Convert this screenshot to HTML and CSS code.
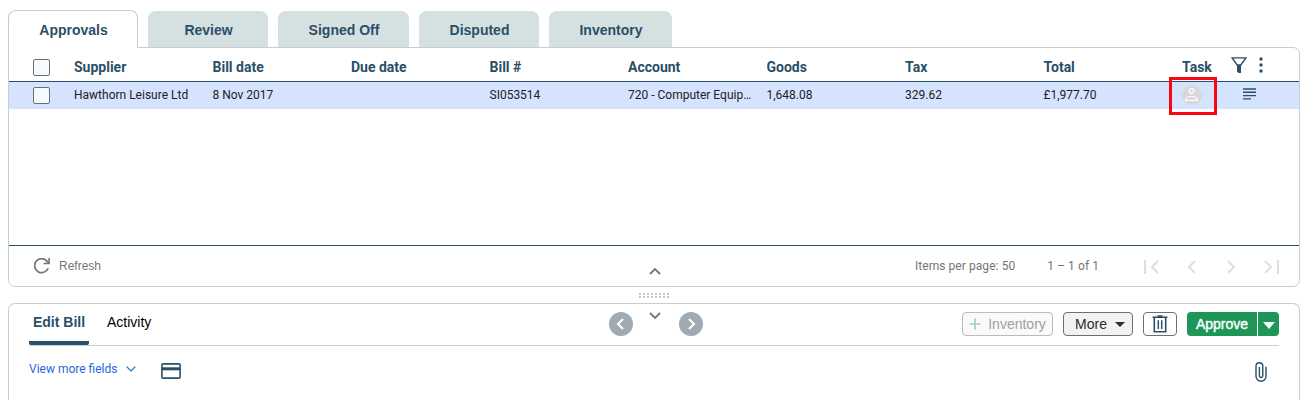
FILE: index.html
```
<!DOCTYPE html>
<html lang="en">
<head>
    <meta charset="UTF-8">
    <meta name="viewport" content="width=device-width, initial-scale=1.0">
    <title>Approvals</title>
    <link rel="stylesheet" href="styles.css">
</head>
<body>
    <nav class="tabs">
        <a class="tab active">Approvals</a>
        <a class="tab">Review</a>
        <a class="tab tab-wide">Signed Off</a>
        <a class="tab">Disputed</a>
        <a class="tab tab-last">Inventory</a>
    </nav>

    <section class="panel bills">
        <div class="row row-head">
            <span class="check"></span>
            <span>Supplier</span>
            <span>Bill date</span>
            <span>Due date</span>
            <span>Bill #</span>
            <span>Account</span>
            <span>Goods</span>
            <span>Tax</span>
            <span>Total</span>
            <span>Task</span>
            <span class="head-icons">
                <svg width="16" height="16" viewBox="0 0 16 16"><path d="M1.2 .9H14.8L9.8 8H6.2Z" fill="none" stroke="currentColor" stroke-width="1.4"/><path d="M6 8h4v8H7.6L6 14.4z" fill="currentColor"/></svg>
                <svg width="4" height="16" viewBox="0 0 4 16" fill="currentColor"><circle cx="2" cy="2" r="1.7"/><circle cx="2" cy="8" r="1.7"/><circle cx="2" cy="14" r="1.7"/></svg>
            </span>
        </div>
        <div class="row row-bill">
            <span class="check"></span>
            <span>Hawthorn Leisure Ltd</span>
            <span>8 Nov 2017</span>
            <span></span>
            <span>SI053514</span>
            <span class="account">720 - Computer Equip…</span>
            <span>1,648.08</span>
            <span>329.62</span>
            <span>£1,977.70</span>
            <span class="task">
                <svg width="20" height="20" viewBox="0 0 20 20"><circle cx="10" cy="10" r="10" fill="#d8d8d8"/><g fill="none" stroke="#fff" stroke-width="1.2"><circle cx="9.5" cy="6" r="2.3"/><path d="M3.6 15.4v-.9c0-1.8 3-3 5.9-3s5.9 1.2 5.9 3v.9z" stroke-linejoin="round"/></g></svg>
                <span class="highlight"></span>
            </span>
            <span class="notes">
                <svg width="13" height="12" viewBox="0 0 13 12"><path d="M0 1h13M0 4.3h13M0 7.6h13M0 10.9h8" stroke="currentColor" stroke-width="1.4"/></svg>
            </span>
        </div>
        <div class="grid-space"></div>
        <div class="footer">
            <a class="refresh">
                <svg width="16" height="16" viewBox="0 0 16 16"><path d="M14.2 10.2A7 7 0 1 1 13.2 3.4L14.6 5" fill="none" stroke="currentColor" stroke-width="1.7"/><path d="M15.9 0v6.2H9.6V4.7h4.7V0z" fill="currentColor"/></svg>
                Refresh
            </a>
            <svg class="collapse-up" width="12" height="8" viewBox="0 0 12 8"><path d="M1 7L6 2L11 7" fill="none" stroke="currentColor" stroke-width="1.8"/></svg>
            <div class="pager">
                <span class="page-size">Items per page: 50</span>
                <span class="range">1 – 1 of 1</span>
                <svg width="15" height="14" viewBox="0 0 15 14"><path d="M1 0v14M14 1L8 7l6 6"/></svg>
                <svg width="9" height="14" viewBox="0 0 9 14"><path d="M8 1L2 7l6 6"/></svg>
                <svg width="9" height="14" viewBox="0 0 9 14"><path d="M1 1l6 6-6 6"/></svg>
                <svg width="15" height="14" viewBox="0 0 15 14"><path d="M1 1l6 6-6 6M14 0v14"/></svg>
            </div>
        </div>
    </section>

    <div class="splitter"><span class="grip"></span></div>

    <section class="panel bill">
        <div class="bill-bar">
            <a class="bill-tab selected">Edit Bill</a>
            <a class="bill-tab">Activity</a>
            <div class="bill-nav">
                <span class="round"><svg width="24" height="24" viewBox="0 0 24 24"><path d="M14 7l-5 5 5 5"/></svg></span>
                <svg class="collapse-down" width="12" height="8" viewBox="0 0 12 8"><path d="M1 1L6 6L11 1" fill="none" stroke="currentColor" stroke-width="1.8"/></svg>
                <span class="round"><svg width="24" height="24" viewBox="0 0 24 24"><path d="M10 7l5 5-5 5"/></svg></span>
            </div>
            <div class="actions">
                <button class="btn inventory" disabled>
                    <svg width="12" height="12" viewBox="0 0 12 12"><path d="M6 .5v11M.5 6h11" stroke="#a3d3b9" stroke-width="1.7"/></svg>
                    Inventory
                </button>
                <button class="btn more">
                    More
                    <svg width="10" height="5" viewBox="0 0 10 5"><path d="M0 0h10L5 5z" fill="currentColor"/></svg>
                </button>
                <button class="btn delete">
                    <svg width="16" height="18" viewBox="0 0 16 18"><path d="M.6 2.2h14.8M5.5 1h5" stroke="currentColor" stroke-width="1.6"/><path d="M2.3 2.5v14.2h11.4V2.5" fill="none" stroke="currentColor" stroke-width="1.6"/><path d="M6.3 5.2v8.7M9.7 5.2v8.7" stroke="currentColor" stroke-width="1.5"/></svg>
                </button>
                <div class="approve">
                    <button class="btn approve-main">Approve</button>
                    <button class="btn approve-more"><svg width="12" height="7" viewBox="0 0 12 7"><path d="M0 0h12L6 7z" fill="currentColor"/></svg></button>
                </div>
            </div>
        </div>
        <div class="bill-tools">
            <a class="more-fields">View more fields
                <svg width="10" height="6" viewBox="0 0 10 6"><path d="M.6.6L5 5L9.4.6" fill="none" stroke="currentColor" stroke-width="1.2"/></svg>
            </a>
            <svg class="card-icon" width="20" height="16" viewBox="0 0 20 16"><rect x=".9" y=".9" width="18.2" height="14.2" rx="1.2" fill="none" stroke="currentColor" stroke-width="1.6"/><path d="M1 5.8h18" stroke="currentColor" stroke-width="3"/></svg>
            <svg class="clip-icon" width="12" height="20" viewBox="0 0 12 20"><path d="M11 4.8v9.4a5 5 0 0 1-10 0V4.2a3.4 3.4 0 0 1 6.8 0v9.6a1.7 1.7 0 0 1-3.4 0V5" fill="none" stroke="currentColor" stroke-width="1.4"/></svg>
        </div>
    </section>
</body>
</html>
```
FILE: styles.css
```
* {
    margin: 0;
    padding: 0;
    box-sizing: border-box;
}

body {
    width: 1310px;
    height: 400px;
    padding: 10px 10px 0 8px;
    background: #fff;
    font-family: Roboto, sans-serif;
    color: #2a4f68;
    overflow: hidden;
}

svg {
    display: block;
    flex: none;
}

.tabs {
    display: flex;
    align-items: flex-end;
    gap: 10px;
    height: 37px;
}

.tab {
    width: 120px;
    height: 36px;
    padding-left: 1px;
    border-radius: 8px 8px 0 0;
    background: #d5e1e1;
    font: bold 14px/38px "Liberation Sans", Arial, sans-serif;
    text-align: center;
}

.tab-wide {
    width: 131px;
}

.tab-last {
    width: 123px;
}

.tab.active {
    position: relative;
    z-index: 1;
    width: 130px;
    height: 38px;
    margin-bottom: -1px;
    border: 1px solid #c2cfd3;
    border-bottom: 0;
    background: #fff;
}

.panel {
    width: 1292px;
    border: 1px solid #c2cfd3;
    border-radius: 7px;
}

.bills {
    height: 240px;
    border-top-left-radius: 0;
}

.row {
    display: grid;
    grid-template-columns: 65px repeat(8, 138.5px) 49px 1fr;
    align-items: center;
}

.row-head {
    height: 34px;
    padding-top: 5px;
    border-bottom: 1px solid #2a4f68;
    font-size: 14px;
    font-weight: bold;
}

.row-bill {
    height: 27px;
    padding-bottom: 1px;
    background: #d6e3ff;
    color: #202124;
    font-size: 12px;
}

.check {
    width: 17px;
    height: 17px;
    margin-left: 24px;
    border: 1px solid #6b6f73;
    border-radius: 2px;
    background: #f6faff;
}

.head-icons {
    display: flex;
    gap: 12px;
    padding-bottom: 5px;
}

.account {
    white-space: nowrap;
}

.task {
    position: relative;
}

.highlight {
    position: absolute;
    left: -13px;
    top: -8px;
    width: 48px;
    height: 38px;
    border: 3px solid #f80612;
}

.notes {
    padding: 0 0 2px 12px;
    color: #2a4f68;
}

.grid-space {
    height: 137px;
    border-bottom: 1px solid #2a4f68;
}

.footer {
    display: grid;
    grid-template-columns: 640px 12px 1fr;
    align-items: center;
    height: 40px;
    color: #757575;
    font-size: 12px;
}

.refresh {
    display: flex;
    align-items: center;
    gap: 9px;
    padding-left: 25px;
    font-family: "Liberation Sans", Arial, sans-serif;
}

.collapse-up {
    margin-top: 10px;
}

.pager {
    display: flex;
    align-items: center;
    justify-content: flex-end;
    padding-right: 20px;
}

.pager svg {
    fill: none;
    stroke: #dedede;
    stroke-width: 2;
    margin-top: 2px;
    margin-left: 28px;
}

.pager svg:nth-of-type(3) {
    margin-left: 31px;
}

.page-size,
.range {
    letter-spacing: 0.07px;
}

.range {
    margin: 0 17px 0 32px;
}

.splitter {
    display: flex;
    justify-content: center;
    width: 1292px;
    height: 16px;
    padding-top: 6px;
}

.grip {
    width: 30px;
    height: 5px;
    background: repeating-linear-gradient(90deg, #c6c6c6 0 2px, transparent 2px 4px);
    mask: linear-gradient(#000 0 2px, transparent 2px 3px, #000 3px);
}

.bill {
    height: 97px;
    padding: 0 20px;
    border-bottom: 0;
    border-radius: 7px 7px 0 0;
}

.bill-bar {
    display: flex;
    height: 42px;
    border-bottom: 1px solid #c2cfd3;
    font-family: "Liberation Sans", Arial, sans-serif;
    font-size: 14px;
}

.bill-tab {
    height: 41px;
    margin-right: 18px;
    color: #000;
    line-height: 37px;
}

.bill-tab.selected {
    width: 60px;
    border-bottom: 4px solid #2a4f68;
    border-radius: 2px;
    color: #2a4f68;
    font-weight: bold;
    text-align: center;
}

.bill-nav {
    display: flex;
    margin: 8px 0 0 440px;
}

.round {
    width: 24px;
    height: 24px;
    border-radius: 50%;
    background: #9eabb4;
}

.round path {
    fill: none;
    stroke: #fff;
    stroke-width: 2;
}

.collapse-down {
    margin: 0 18px 0 16px;
    color: #757575;
}

.actions {
    display: flex;
    gap: 10px;
    margin: 8px 0 0 auto;
}

.btn {
    display: flex;
    align-items: center;
    justify-content: center;
    height: 24px;
    border: 1px solid #6b6f73;
    border-radius: 4px;
    background: #f2f2f2;
    color: #2b2b2b;
    font: 14px "Liberation Sans", Arial, sans-serif;
}

.inventory {
    gap: 7px;
    width: 91px;
    border-color: #bcbcbc;
    background: #fafafa;
    color: #a0a0a0;
}

.more {
    gap: 8px;
    width: 70px;
    padding-left: 4px;
}

.delete {
    width: 34px;
    background: #fff;
    color: #2a4f68;
}

.approve {
    display: flex;
    gap: 1px;
}

.approve-main,
.approve-more {
    border: 0;
    background: #1e9658;
    color: #fff;
}

.approve-main {
    width: 70px;
    border-radius: 4px 0 0 4px;
    -webkit-text-stroke: 0.4px #fff;
}

.approve-more {
    width: 21px;
    padding-top: 2px;
    border-radius: 0 4px 4px 0;
}

.bill-tools {
    display: flex;
    padding: 16px 12px 0 0;
}

.more-fields {
    display: flex;
    align-items: center;
    gap: 9px;
    height: 14px;
    color: #2768d8;
    font-size: 12px;
}

.card-icon {
    margin: 1px 0 0 25px;
}

.clip-icon {
    margin-left: auto;
}
```
